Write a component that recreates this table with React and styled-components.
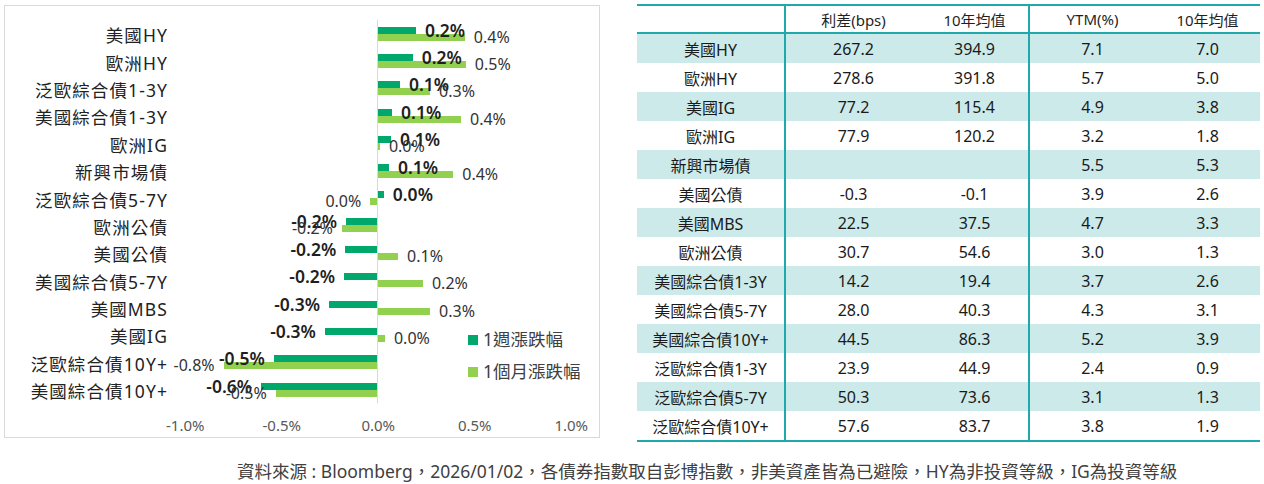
import React from 'react'
import styled, { createGlobalStyle } from 'styled-components'

const GlobalStyle = createGlobalStyle`
  body {
    margin: 0;
    background: #fff;
    font-family: "Noto Sans", "Noto Sans CJK TC", sans-serif;
    color: #262626;
  }
`

const SCALE = 193

const bonds = [
  { name: '美國HY', w: 0.197, wl: '0.2%', m: 0.45, ml: '0.4%' },
  { name: '歐洲HY', w: 0.18, wl: '0.2%', m: 0.455, ml: '0.5%' },
  { name: '泛歐綜合債1-3Y', w: 0.114, wl: '0.1%', m: 0.27, ml: '0.3%' },
  { name: '美國綜合債1-3Y', w: 0.073, wl: '0.1%', m: 0.43, ml: '0.4%' },
  { name: '歐洲IG', w: 0.067, wl: '0.1%', m: 0.01, ml: '0.0%' },
  { name: '新興市場債', w: 0.057, wl: '0.1%', m: 0.39, ml: '0.4%' },
  { name: '泛歐綜合債5-7Y', w: 0.03, wl: '0.0%', m: -0.04, ml: '0.0%' },
  { name: '歐洲公債', w: -0.166, wl: '-0.2%', m: -0.187, ml: '-0.2%' },
  { name: '美國公債', w: -0.17, wl: '-0.2%', m: 0.104, ml: '0.1%' },
  { name: '美國綜合債5-7Y', w: -0.176, wl: '-0.2%', m: 0.233, ml: '0.2%' },
  { name: '美國MBS', w: -0.254, wl: '-0.3%', m: 0.27, ml: '0.3%' },
  { name: '美國IG', w: -0.275, wl: '-0.3%', m: 0.036, ml: '0.0%' },
  { name: '泛歐綜合債10Y+', w: -0.54, wl: '-0.5%', m: -0.8, ml: '-0.8%' },
  { name: '美國綜合債10Y+', w: -0.606, wl: '-0.6%', m: -0.53, ml: '-0.5%' }
]

const ticks = ['-1.0%', '-0.5%', '0.0%', '0.5%', '1.0%']

const tableRows = [
  ['美國HY', '267.2', '394.9', '7.1', '7.0'],
  ['歐洲HY', '278.6', '391.8', '5.7', '5.0'],
  ['美國IG', '77.2', '115.4', '4.9', '3.8'],
  ['歐洲IG', '77.9', '120.2', '3.2', '1.8'],
  ['新興市場債', '', '', '5.5', '5.3'],
  ['美國公債', '-0.3', '-0.1', '3.9', '2.6'],
  ['美國MBS', '22.5', '37.5', '4.7', '3.3'],
  ['歐洲公債', '30.7', '54.6', '3.0', '1.3'],
  ['美國綜合債1-3Y', '14.2', '19.4', '3.7', '2.6'],
  ['美國綜合債5-7Y', '28.0', '40.3', '4.3', '3.1'],
  ['美國綜合債10Y+', '44.5', '86.3', '5.2', '3.9'],
  ['泛歐綜合債1-3Y', '23.9', '44.9', '2.4', '0.9'],
  ['泛歐綜合債5-7Y', '50.3', '73.6', '3.1', '1.3'],
  ['泛歐綜合債10Y+', '57.6', '83.7', '3.8', '1.9']
]

const colors = {
  week: '#00a86b',
  month: '#92d050'
}

const Page = styled.div`
  display: flex;
  flex-direction: column;
  width: 1264px;
`

const Top = styled.div`
  display: flex;
  align-items: flex-start;
`

const ChartBox = styled.div`
  position: relative;
  box-sizing: border-box;
  width: 596px;
  height: 433px;
  margin: 5px 0 0 4px;
  padding-top: 14px;
  border: 1px solid #d9d9d9;
`

const Rows = styled.div`
  display: flex;
  flex-direction: column;
`

const Row = styled.div`
  display: grid;
  grid-template-columns: 162px 18px 193px 192px;
  height: 27.4px;
`

const Category = styled.div`
  grid-column: 1;
  display: flex;
  align-items: center;
  justify-content: flex-end;
  padding-top: 2px;
  font-size: 17.5px;
  letter-spacing: 1.1px;
  margin-right: -1px;
  color: #222;
  white-space: nowrap;
`

const Half = styled.div`
  display: flex;
  flex-direction: column;
  justify-content: center;
  border-left: ${p => (p.$axis ? '1px solid #d9d9d9' : 'none')};
  margin-left: ${p => (p.$axis ? '-1px' : '0')};
`

const Track = styled.div`
  display: flex;
  align-items: center;
  justify-content: ${p => (p.$neg ? 'flex-end' : 'flex-start')};
  height: 7px;
`

const Bar = styled.div`
  height: 7px;
  flex-shrink: 0;
  background: ${p => colors[p.$kind]};
`

const Value = styled.span`
  position: relative;
  z-index: 1;
  margin: ${p => (p.$neg ? '0 9px 0 0' : '0 0 0 9px')};
  line-height: 7px;
  white-space: nowrap;
  font-size: ${p => (p.$kind === 'week' ? '17.5px' : '16px')};
  font-weight: ${p => (p.$kind === 'week' ? 600 : 400)};
  color: ${p => (p.$kind === 'week' ? '#1f1f1f' : '#333')};
`

const Axis = styled.div`
  display: grid;
  grid-template-columns: repeat(5, 96.5px);
  margin: 12px 0 0 132px;
`

const Tick = styled.span`
  text-align: center;
  font-size: 15px;
  color: #595959;
`

const Legend = styled.div`
  position: absolute;
  left: 463px;
  top: 322px;
  display: flex;
  flex-direction: column;
  gap: 9px;
`

const LegendItem = styled.div`
  display: flex;
  align-items: center;
  gap: 5px;
  font-size: 17.5px;
  color: #404040;
  line-height: 23px;
`

const Swatch = styled.span`
  width: 10px;
  height: 10px;
  background: ${p => colors[p.$kind]};
`

const Table = styled.table`
  margin: 4px 0 0 37px;
  width: 623px;
  border-collapse: collapse;
  table-layout: fixed;
  border-top: 2px solid #1fa9ab;
  border-bottom: 2px solid #1fa9ab;
  font-size: 16px;
  color: #1a1a1a;
`

const Th = styled.th`
  height: 26px;
  padding: 0;
  font-size: 15px;
  font-weight: 400;
  color: #1f1f1f;
  text-align: center;
  border-bottom: 2px solid #1fa9ab;
  border-right: ${p => (p.$divider ? '2px solid #1fa9ab' : 'none')};
`

const Tr = styled.tr`
  background: ${p => (p.$shade ? '#cdeaeb' : '#fff')};
`

const Td = styled.td`
  height: 29px;
  padding: 0;
  text-align: center;
  white-space: nowrap;
  font-size: 16px;
  border-right: ${p => (p.$divider ? '2px solid #1fa9ab' : 'none')};
`

const Footer = styled.div`
  margin: 17px 0 0 237px;
  font-size: 17.5px;
  line-height: 24px;
  color: #404040;
  white-space: nowrap;
`

const Series = ({ value, label, kind, neg }) => {
  const show = neg ? value < 0 : value >= 0
  return (
    <Track $neg={neg}>
      {show && neg && <Value $neg $kind={kind}>{label}</Value>}
      {show && <Bar $kind={kind} style={{ width: Math.abs(value) * SCALE }} />}
      {show && !neg && <Value $kind={kind}>{label}</Value>}
    </Track>
  )
}

const BarChart = () =>
  <ChartBox>
    <Rows>
      {bonds.map(b =>
        <Row key={b.name}>
          <Category>{b.name}</Category>
          <Half style={{ gridColumn: 3 }}>
            <Series neg value={b.w} label={b.wl} kind="week" />
            <Series neg value={b.m} label={b.ml} kind="month" />
          </Half>
          <Half $axis>
            <Series value={b.w} label={b.wl} kind="week" />
            <Series value={b.m} label={b.ml} kind="month" />
          </Half>
        </Row>
      )}
    </Rows>
    <Axis>
      {ticks.map(t => <Tick key={t}>{t}</Tick>)}
    </Axis>
    <Legend>
      <LegendItem><Swatch $kind="week" />1週漲跌幅</LegendItem>
      <LegendItem><Swatch $kind="month" />1個月漲跌幅</LegendItem>
    </Legend>
  </ChartBox>

const SpreadTable = () =>
  <Table>
    <colgroup>
      <col style={{ width: 148 }} />
      <col style={{ width: 136 }} />
      <col style={{ width: 108 }} />
      <col style={{ width: 126 }} />
      <col style={{ width: 105 }} />
    </colgroup>
    <thead>
      <tr>
        <Th $divider />
        <Th>利差(bps)</Th>
        <Th $divider>10年均值</Th>
        <Th>YTM(%)</Th>
        <Th>10年均值</Th>
      </tr>
    </thead>
    <tbody>
      {tableRows.map((r, i) =>
        <Tr key={r[0]} $shade={i % 2 === 0}>
          <Td $divider>{r[0]}</Td>
          <Td>{r[1]}</Td>
          <Td $divider>{r[2]}</Td>
          <Td>{r[3]}</Td>
          <Td>{r[4]}</Td>
        </Tr>
      )}
    </tbody>
  </Table>

const App = () =>
  <Page>
    <GlobalStyle />
    <Top>
      <BarChart />
      <SpreadTable />
    </Top>
    <Footer>
      資料來源 : Bloomberg，2026/01/02，各債券指數取自彭博指數，非美資產皆為已避險，HY為非投資等級，IG為投資等級
    </Footer>
  </Page>

export default App
